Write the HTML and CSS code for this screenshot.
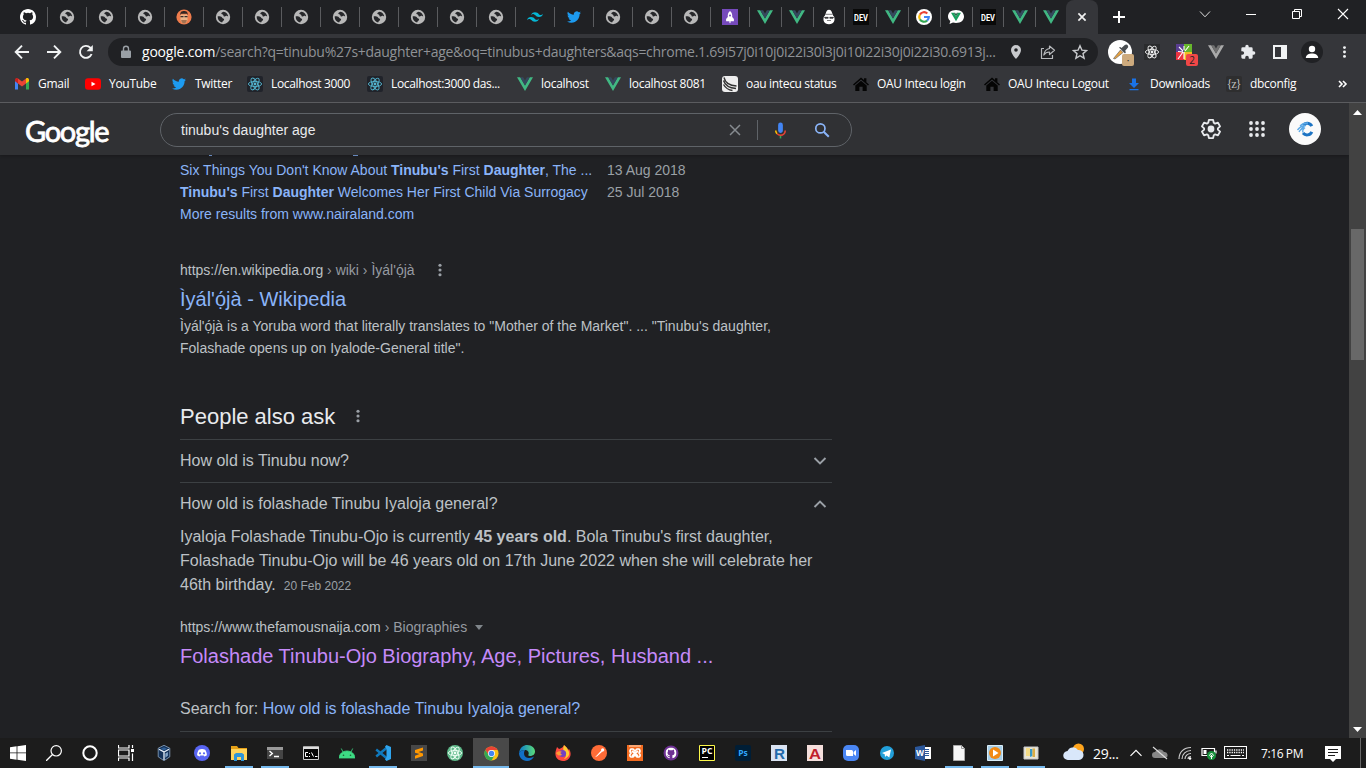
FILE: index.html
```html
<!DOCTYPE html>
<html lang="en">
<head>
<meta charset="utf-8">
<title>tinubu's daughter age - Google Search</title>
<link rel="stylesheet" href="styles.css">
</head>
<body>
<svg class="sprite" aria-hidden="true">
  <symbol id="globe" viewBox="0 0 16 16"><circle cx="8" cy="8" r="7.200" fill="#b8b8b8"/><path d="M2.800 7.200c1.200.1 2.500-.1 3.500.5.900.5.900 1.500 2 1.700 1.100.3 1 1.600.2 2.200-.7.500-.8 1.100-1.400 1.900C4.500 13 2.700 10.700 2.700 8zM8.600 2.700c-.9.500-2.500.8-2.300 1.900.1.900 1.500.7 1.900 1.300.4.700.2 1.700 1.500 1.600 1.100 0 1.300-.8 2.400-.6.500.1.700.4 1.100.4-.3-2.300-2.200-4.400-4.600-4.600z" fill="#26272a"/></symbol>
  <symbol id="github" viewBox="0 0 16 16"><path d="M8 0C3.580 0 0 3.580 0 8c0 3.540 2.290 6.530 5.470 7.590.4.070.55-.17.55-.38 0-.19-.01-.82-.01-1.490-2.010.37-2.530-.49-2.690-.94-.09-.23-.48-.94-.82-1.130-.28-.15-.68-.52-.01-.53.63-.01 1.080.58 1.230.82.72 1.210 1.870.87 2.330.66.070-.52.28-.87.51-1.070-1.780-.2-3.640-.89-3.640-3.950 0-.87.31-1.590.82-2.150-.08-.2-.36-1.020.08-2.120 0 0 .67-.21 2.200.82a7.600 7.600 0 0 1 4 0c1.530-1.040 2.200-.82 2.200-.82.44 1.100.16 1.920.08 2.120.51.56.82 1.270.82 2.150 0 3.070-1.870 3.750-3.650 3.950.29.25.54.73.54 1.480 0 1.070-.01 1.930-.01 2.200 0 .21.15.46.55.38A8.010 8.010 0 0 0 16 8c0-4.420-3.580-8-8-8z" fill="#fff"/></symbol>
  <symbol id="vue" viewBox="0 0 16 16"><path d="M0 1.200h3.200L8 9.500l4.800-8.300H16L8 15z" fill="#41b883"/><path d="M3.200 1.200h2.900L8 4.500l1.900-3.300h2.900L8 9.500z" fill="#35495e"/></symbol>
  <symbol id="twitter" viewBox="0 0 24 24"><path d="M23.950 4.570a10 10 0 0 1-2.820.77 4.960 4.960 0 0 0 2.160-2.720c-.95.550-2 .950-3.130 1.180a4.920 4.920 0 0 0-8.380 4.480C7.690 8.100 4.070 6.130 1.640 3.160a4.900 4.900 0 0 0 1.520 6.570 4.900 4.900 0 0 1-2.230-.61v.06a4.920 4.920 0 0 0 3.950 4.830 5 5 0 0 1-2.210.08 4.940 4.940 0 0 0 4.600 3.420A9.870 9.870 0 0 1 0 19.540a14 14 0 0 0 7.550 2.210c9.050 0 14-7.500 14-13.980 0-.21 0-.42-.02-.63a10 10 0 0 0 2.420-2.570z" fill="#1d9bf0"/></symbol>
  <symbol id="atomrings" viewBox="0 0 16 16"><g fill="none" stroke="currentColor" stroke-width=".9"><ellipse cx="8" cy="8" rx="6.600" ry="2.600"/><ellipse cx="8" cy="8" rx="6.600" ry="2.600" transform="rotate(60 8 8)"/><ellipse cx="8" cy="8" rx="6.600" ry="2.600" transform="rotate(120 8 8)"/></g><circle cx="8" cy="8" r="1.400" fill="currentColor"/></symbol>
  <symbol id="dots" viewBox="0 0 16 16"><g fill="currentColor"><circle cx="8" cy="2.600" r="1.800"/><circle cx="8" cy="8" r="1.800"/><circle cx="8" cy="13.400" r="1.800"/></g></symbol>
  <symbol id="home" viewBox="0 0 16 16"><path d="M0 8.500L8 1.500l3 2.600V2.300h2.400v3.900L16 8.500l-1 1L8 3.600 1 9.500z" fill="#050505"/><path d="M2.300 9.400L8 4.700l5.700 4.700V15H9.600v-4.200H6.400V15H2.300z" fill="#050505"/></symbol>
</svg>

<div class="browser">
  <header class="tabstrip">
    <nav class="tabs">
      <span class="tab"><svg><use href="#github"/></svg></span>
      <span class="tab"><svg><use href="#globe"/></svg></span>
      <span class="tab"><svg><use href="#globe"/></svg></span>
      <span class="tab"><svg><use href="#globe"/></svg></span>
      <span class="tab"><svg viewBox="0 0 16 16"><circle cx="8" cy="8" r="7.600" fill="#ef7c4c"/><path d="M4.500 5.500h7v5c0 2-1.500 4-3.500 4s-3.500-2-3.500-4z" fill="#eab387"/><path d="M4.300 6c-.3-3.500 1.700-4 3.700-4s4 .5 3.700 4l-1-1.200H5.300z" fill="#332623"/><path d="M4.500 7h3v1.300h-3zM8.500 7h3v1.300h-3z" fill="#3b2c2a"/><path d="M5.200 11h5.600c0 2.300-1.300 3.500-2.800 3.500S5.200 13.300 5.200 11z" fill="#a5714f"/></svg></span>
      <span class="tab"><svg><use href="#globe"/></svg></span>
      <span class="tab"><svg><use href="#globe"/></svg></span>
      <span class="tab"><svg><use href="#globe"/></svg></span>
      <span class="tab"><svg><use href="#globe"/></svg></span>
      <span class="tab"><svg><use href="#globe"/></svg></span>
      <span class="tab"><svg><use href="#globe"/></svg></span>
      <span class="tab"><svg><use href="#globe"/></svg></span>
      <span class="tab"><svg><use href="#globe"/></svg></span>
      <span class="tab"><svg viewBox="0 0 24 24"><path d="M12 4.800c-3.200 0-5.200 1.600-6 4.800 1.200-1.600 2.600-2.200 4.200-1.800.91.230 1.570.89 2.290 1.620C13.660 10.620 15.030 12 18 12c3.200 0 5.200-1.600 6-4.800-1.200 1.600-2.600 2.200-4.200 1.800-.91-.23-1.570-.89-2.290-1.620C16.340 6.180 14.970 4.800 12 4.800zM6 12c-3.200 0-5.200 1.600-6 4.800 1.200-1.600 2.600-2.200 4.200-1.800.91.230 1.570.89 2.290 1.620C7.660 17.820 9.030 19.200 12 19.200c3.200 0 5.200-1.600 6-4.800-1.200 1.600-2.600 2.200-4.200 1.800-.91-.23-1.570-.89-2.290-1.620C10.340 13.380 8.970 12 6 12z" fill="#06b6d4"/></svg></span>
      <span class="tab"><svg class="small"><use href="#twitter"/></svg></span>
      <span class="tab"><svg><use href="#globe"/></svg></span>
      <span class="tab"><svg><use href="#globe"/></svg></span>
      <span class="tab"><svg><use href="#globe"/></svg></span>
      <span class="tab"><svg viewBox="0 0 16 16"><path d="M0 0h16v16H0z" fill="#764abc"/><path d="M8 2c2 1.600 2.500 4 2.200 6l1.700 2v2.300H4.100V10l1.700-2C5.500 6 6 3.600 8 2zM7 12.500h2L8 14.500z" fill="#fff"/><circle cx="8" cy="6.500" r="1" fill="#764abc"/></svg></span>
      <span class="tab narrow"><svg><use href="#vue"/></svg></span>
      <span class="tab narrow"><svg><use href="#vue"/></svg></span>
      <span class="tab narrow"><svg viewBox="0 0 16 16"><path d="M8 .8c2 0 3 2 3.200 4H12v1.700l1 1c1.500 3.500 0 7.800-5 7.800s-6.500-4.300-5-7.800l1-1V4.800h.8C5 2.800 6 .8 8 .8z" fill="#fff"/><path d="M4 5.300h8M3.500 8.300h3.700v1H4zM8.800 8.300h3.700L12 9.300H8.800zM6 11.500h4" stroke="#26272a" stroke-width=".6" fill="#26272a"/></svg></span>
      <span class="tab narrow"><svg class="dev" viewBox="0 0 16 16"><path d="M0 0h16v16H0z" fill="#090909"/><text x="1" y="11.500" textLength="14" lengthAdjust="spacingAndGlyphs">DEV</text></svg></span>
      <span class="tab narrow"><svg><use href="#vue"/></svg></span>
      <span class="tab narrow"><svg viewBox="0 0 16 16"><circle cx="8" cy="8" r="8" fill="#fff"/><g fill="none" stroke-width="2.200"><path d="M11.300 4.500A4.800 4.800 0 0 0 3.900 5.600" stroke="#ea4335"/><path d="M3.900 5.600a4.800 4.800 0 0 0 0 4.800" stroke="#fbbc04"/><path d="M3.900 10.400a4.800 4.800 0 0 0 7.200 1.200" stroke="#34a853"/><path d="M11.100 11.600A4.800 4.800 0 0 0 12.800 8H8" stroke="#4285f4"/></g></svg></span>
      <span class="tab narrow"><svg viewBox="0 0 16 16"><path d="M8 1c5 0 8 2.800 8 6.500S13 14 8 14c-1 0-2 0-3-.4L1.500 15l.8-3C.8 10.700 0 9.300 0 7.500 0 3.800 3 1 8 1z" fill="#fff"/><path d="M3 3.700h2.800L8 7.500l2.200-3.800H13L8 12.300z" fill="#18a05e"/><path d="M5.800 3.700h1.400L8 5.200l.8-1.500h1.400L8 7.500z" fill="#246447"/></svg></span>
      <span class="tab narrow"><svg class="dev" viewBox="0 0 16 16"><path d="M0 0h16v16H0z" fill="#090909"/><text x="1" y="11.500" textLength="14" lengthAdjust="spacingAndGlyphs">DEV</text></svg></span>
      <span class="tab narrow"><svg><use href="#vue"/></svg></span>
      <span class="tab narrow last"><svg><use href="#vue"/></svg></span>
      <span class="tab active"><svg viewBox="0 0 16 16"><path d="M4.400 4.400l7.200 7.200M11.600 4.400l-7.200 7.200" stroke="#f1f1f1" stroke-width="1.700"/></svg></span>
    </nav>
    <svg class="newtab" viewBox="0 0 16 16"><path d="M8 2v12M2 8h12" stroke="#fff" stroke-width="2"/></svg>
    <div class="wincontrols">
      <svg viewBox="0 0 16 16"><path d="M3 5.500l5 5.300 5-5.300" fill="none" stroke="#ddd"/></svg>
      <svg viewBox="0 0 16 16"><path d="M3 8.500h10" stroke="#fff"/></svg>
      <svg viewBox="0 0 16 16"><path d="M3.500 5.500h7v7h-7zM5.500 5V3.500h7v7H11" fill="none" stroke="#fff"/></svg>
      <svg viewBox="0 0 16 16"><path d="M3 3l10 10M13 3L3 13" stroke="#fff" stroke-width="1.100"/></svg>
    </div>
  </header>

  <div class="toolbar">
    <div class="navbuttons">
      <svg viewBox="0 0 16 16"><path d="M15 8H2M8 1.700L1.700 8 8 14.300" fill="none" stroke="#f1f3f4" stroke-width="1.900"/></svg>
      <svg viewBox="0 0 16 16"><path d="M1 8h13M8 1.700L14.300 8 8 14.300" fill="none" stroke="#f1f3f4" stroke-width="1.900"/></svg>
      <svg viewBox="0 0 16 16"><path d="M13.600 10A6 6 0 1 1 12.300 3.700L13.800 5.200" fill="none" stroke="#f1f3f4" stroke-width="1.900"/><path d="M14.800 1v6.200H8.600z" fill="#f1f3f4"/></svg>
    </div>
    <div class="omnibox">
      <svg class="lock" viewBox="0 0 12 14"><path d="M2 5.500h8a1 1 0 0 1 1 1V12a1 1 0 0 1-1 1H2a1 1 0 0 1-1-1V6.500a1 1 0 0 1 1-1z" fill="#9aa0a6"/><path d="M3.500 6V3.800a2.500 2.500 0 0 1 5 0V6" fill="none" stroke="#9aa0a6" stroke-width="1.400"/></svg>
      <div class="url"><span class="host">google.com</span><span class="path">/search?q=tinubu%27s+daughter+age&amp;oq=tinubus+daughters&amp;aqs=chrome.1.69i57j0i10j0i22i30l3j0i10i22i30j0i22i30.6913j...</span></div>
      <div class="omniactions">
        <svg viewBox="0 0 16 16"><path d="M8 1a5 5 0 0 0-5 5c0 3.700 5 9 5 9s5-5.300 5-9a5 5 0 0 0-5-5zm0 6.800A1.800 1.800 0 1 1 8 4.200a1.800 1.800 0 0 1 0 3.600z" fill="#c7c9cc"/></svg>
        <svg viewBox="0 0 16 16"><path d="M4 4.500H1.500v10h11V11M9.500 2l5 4.300-5 4.200V8C7 8 5 9 3.800 11c.5-3.500 2.400-6 5.700-6.500z" fill="none" stroke="#b7b9bc" stroke-width="1.200" stroke-linejoin="round"/></svg>
        <svg viewBox="0 0 16 16"><path d="M8 1.800l1.900 4.300 4.700.4-3.600 3.100 1.100 4.600L8 11.700l-4.100 2.500L5 9.600 1.400 6.500l4.700-.4z" fill="none" stroke="#c7c9cc" stroke-width="1.400"/></svg>
      </div>
    </div>
    <div class="extensions">
      <span class="ext"><svg class="picker" viewBox="0 0 24 24"><circle cx="12" cy="12" r="12" fill="#fff"/><path d="M5.500 18.500l7-8.500 2.500 2.500-8 6.500z" fill="#e6a243" stroke="#555" stroke-width=".6"/><path d="M11 7.500l6 6 1-1.500-1-1 3-3.500c1-2-1.500-4-3.200-2.500L13.500 8l-1.300-1z" fill="#4a4e52"/></svg><b class="badge tan">·</b></span>
      <span class="ext"><svg class="darktile" viewBox="0 0 16 16"><use href="#atomrings"/></svg></span>
      <span class="ext"><svg viewBox="0 0 16 16"><path d="M0 0h8v8H0z" fill="#5a3e91"/><path d="M8 0h8v8H8z" fill="#67b72c"/><path d="M0 8h8v8H0z" fill="#ed3342"/><path d="M8 8h8v8H8z" fill="#f1bc22"/><path d="M2 15l5-7M8 8v7M7 7L3 3M8 6V2M9 7l4-5M7 8L2 7.500" stroke="#fff" stroke-width="1.100"/></svg><b class="badge red">2</b></span>
      <span class="ext"><svg viewBox="0 0 16 16"><path d="M0 1.200h3.200L8 9.500l4.800-8.300H16L8 15z" fill="#aaa"/><path d="M3.200 1.200h2.900L8 4.500l1.900-3.300h2.900L8 9.500z" fill="#707070"/></svg></span>
      <span class="ext"><svg viewBox="0 0 24 24"><path d="M20.500 11H19V7a2 2 0 0 0-2-2h-4V3.500a2.500 2.500 0 0 0-5 0V5H4a2 2 0 0 0-2 2v3.800h1.500a2.700 2.700 0 0 1 0 5.400H2V20a2 2 0 0 0 2 2h3.800v-1.500a2.700 2.700 0 0 1 5.400 0V22H17a2 2 0 0 0 2-2v-4h1.500a2.500 2.500 0 0 0 0-5z" fill="#e8eaed"/></svg></span>
      <span class="ext"><svg viewBox="0 0 16 16"><path d="M1 1h14v14H1zm2 2v10h6V3z" fill="#f1f3f4" fill-rule="evenodd"/></svg></span>
      <span class="ext"><svg class="profile" viewBox="0 0 22 22"><circle cx="11" cy="11" r="11" fill="#202124"/><circle cx="11" cy="8" r="3.200" fill="#fff"/><path d="M4.800 17c0-3.300 3.200-4.500 6.200-4.500s6.200 1.200 6.200 4.500z" fill="#fff"/></svg></span>
      <span class="ext menu"><svg><use href="#dots"/></svg></span>
    </div>
  </div>

  <nav class="bookmarks">
    <a class="bm w31"><svg viewBox="0 0 16 16"><path d="M1 4v9.500h3V7.300z" fill="#4285f4"/><path d="M12 7.300v6.200h3V4z" fill="#34a853"/><path d="M1 4.500V3.800C1 2 3 1.700 4 2.500v5L1 5.300z" fill="#c5221f"/><path d="M4 2.500l4 3.100 4-3.100v5L8 10.600 4 7.500z" fill="#ea4335"/><path d="M12 2.500c1-.8 3-.5 3 1.300v1.500l-3 2.200z" fill="#fbbc04"/></svg><span>Gmail</span></a>
    <a class="bm w46"><svg viewBox="0 0 16 16"><rect y="2.200" width="16" height="11.600" rx="3" fill="#f00"/><path d="M6.500 5.700L10.500 8l-4 2.300z" fill="#fff"/></svg><span>YouTube</span></a>
    <a class="bm w36"><svg class="small"><use href="#twitter"/></svg><span>Twitter</span></a>
    <a class="bm w80"><svg class="reacttile" viewBox="0 0 16 16"><use href="#atomrings"/></svg><span>Localhost 3000</span></a>
    <a class="bm w110"><svg class="reacttile" viewBox="0 0 16 16"><use href="#atomrings"/></svg><span>Localhost:3000 das...</span></a>
    <a class="bm w48"><svg><use href="#vue"/></svg><span>localhost</span></a>
    <a class="bm w77"><svg><use href="#vue"/></svg><span>localhost 8081</span></a>
    <a class="bm w91"><svg viewBox="0 0 16 16"><rect width="16" height="16" rx="3" fill="#eee"/><path d="M2 1.500C3 6 6 9.500 14.500 10M1.500 4.500C3 9 7 12 14 12.500M1.500 8.500c2 3.500 5 5.500 9 6" fill="none" stroke="#333" stroke-width="1.400"/></svg><span>oau intecu status</span></a>
    <a class="bm w91"><svg><use href="#home"/></svg><span>OAU Intecu login</span></a>
    <a class="bm w102"><svg><use href="#home"/></svg><span>OAU Intecu Logout</span></a>
    <a class="bm w60"><svg viewBox="0 0 16 16"><path d="M6 2.500h4V7h3l-5 5-5-5h3zM3.500 13h9v1.300h-9z" fill="#1a73e8"/></svg><span>Downloads</span></a>
    <a class="bm w48"><svg class="ztile" viewBox="0 0 16 16"><rect width="16" height="16" rx="2" fill="#2e2e2f"/><text x=".5" y="11.800" textLength="15">{z}</text></svg><span>dbconfig</span></a>
    <svg class="overflow" viewBox="0 0 10 10"><path d="M1 2l3 3-3 3M5 2l3 3-3 3" fill="none" stroke="#fff" stroke-width="1.600"/></svg>
  </nav>
</div>

<div class="viewport">
  <div class="page">
    <header class="searchheader">
      <div class="logo">Google</div>
      <div class="searchbox">
        <span class="query">tinubu's daughter age</span>
        <svg class="clear" viewBox="0 0 16 16"><path d="M2.300 2.300l11.400 11.400M13.700 2.300L2.300 13.700" stroke="#868b90" stroke-width="1.700"/></svg>
        <i class="divider"></i>
        <svg class="mic" viewBox="0 0 24 24"><path d="M12 15c1.660 0 3-1.310 3-2.970V4.980A3 3 0 0 0 12 2a3 3 0 0 0-3 2.980v7.050A3 3 0 0 0 12 15z" fill="#4285f4"/><path d="M11 18.080h2V22h-2z" fill="#34a853"/><path d="M7.050 16.870C5.770 15.580 5 13.900 5 12h2a4.900 4.900 0 0 0 1.460 3.490z" fill="#fbbc04"/><path d="M12 16.930a4.970 4.970 0 0 1-3.540-1.550l-1.410 1.490A7 7 0 0 0 12 18.990 7 7 0 0 0 19 12h-2a5 5 0 0 1-5 4.930z" fill="#ea4335"/></svg>
        <svg class="glass" viewBox="0 0 20 20"><circle cx="7.500" cy="7.500" r="5.400" fill="none" stroke="#8ab4f8" stroke-width="2"/><path d="M11.400 11.400l6 6" stroke="#8ab4f8" stroke-width="2.400"/></svg>
      </div>
      <div class="account">
        <svg class="gear" viewBox="0 0 24 24"><path d="M9.700 2h4.600l.7 3.200 1.500.9 3.100-1 2.300 4-2.400 2.200v1.400l2.400 2.200-2.300 4-3.100-1-1.500.9-.7 3.200H9.700L9 18.800l-1.500-.9-3.100 1-2.300-4 2.400-2.200v-1.400L2.100 9.100l2.300-4 3.100 1L9 5.200z" fill="none" stroke="#e8eaed" stroke-width="2" stroke-linejoin="round"/><circle cx="12" cy="12" r="3.700" fill="#e8eaed"/></svg>
        <svg class="apps" viewBox="0 0 16 16"><g fill="#e8eaed"><circle cx="2" cy="2" r="1.900"/><circle cx="8" cy="2" r="1.900"/><circle cx="14" cy="2" r="1.900"/><circle cx="2" cy="8" r="1.900"/><circle cx="8" cy="8" r="1.900"/><circle cx="14" cy="8" r="1.900"/><circle cx="2" cy="14" r="1.900"/><circle cx="8" cy="14" r="1.900"/><circle cx="14" cy="14" r="1.900"/></g></svg>
        <svg class="avatar" viewBox="0 0 32 32"><circle cx="16" cy="16" r="16" fill="#fafafa"/><path d="M22.800 13.200A5.200 5.200 0 0 0 14 12.200M22.800 18.800A5.200 5.200 0 0 1 14 20" fill="none" stroke="#1d74c4" stroke-width="3"/><path d="M8.500 17c2.500-3.500 5-4.500 8.500-4.500-3 1-4.500 2.500-5 4.500M11 13c2.500-2.500 5-3 8-3M10 19c1.500-2.800 3.500-4 6-4-2 1-2.500 3-2 4.500" fill="none" stroke="#5ba8e6" stroke-width="1.300"/></svg>
      </div>
    </header>

    <main class="results">
      <svg class="peek" viewBox="0 0 400 1"><path d="M29 0h3v1h-3zM173 0h5v1h-5z" fill="#6688bd"/></svg>
      <section class="sitelinks">
        <div class="row"><a>Six Things You Don't Know About <b>Tinubu's</b> First <b>Daughter</b>, The ...</a><time>13 Aug 2018</time></div>
        <div class="row"><a><b>Tinubu's</b> First <b>Daughter</b> Welcomes Her First Child Via Surrogacy</a><time>25 Jul 2018</time></div>
        <div class="row"><a>More results from www.nairaland.com</a></div>
      </section>

      <article class="result">
        <div class="cite"><span>https://en.wikipedia.org<em> › wiki › Ìyál'ọ́jà</em></span><svg class="more"><use href="#dots"/></svg></div>
        <h3>Ìyál'ọ́jà - Wikipedia</h3>
        <p>Ìyál'ọ́jà is a Yoruba word that literally translates to "Mother of the Market". ... "Tinubu's daughter,<br>Folashade opens up on Iyalode-General title".</p>
      </article>

      <section class="paa">
        <h2><span>People also ask</span> <svg class="more"><use href="#dots"/></svg></h2>
        <div class="question"><span>How old is Tinubu now?</span><svg viewBox="0 0 16 16"><path d="M2.500 5l5.500 5.500L13.500 5" fill="none" stroke="#9aa0a6" stroke-width="1.900"/></svg></div>
        <div class="question open"><span>How old is folashade Tinubu Iyaloja general?</span><svg viewBox="0 0 16 16"><path d="M2.500 11L8 5.500l5.500 5.500" fill="none" stroke="#9aa0a6" stroke-width="1.900"/></svg></div>
        <p class="answer">Iyaloja Folashade Tinubu-Ojo is currently <b>45 years old</b>. Bola Tinubu's first daughter,<br>Folashade Tinubu-Ojo will be 46 years old on 17th June 2022 when she will celebrate her<br>46th birthday.<time>20 Feb 2022</time></p>
        <div class="cite"><span>https://www.thefamousnaija.com<em> › Biographies</em></span><svg class="caret" viewBox="0 0 8 5"><path d="M0 0h8L4 5z" fill="#80868b"/></svg></div>
        <h3 class="visited">Folashade Tinubu-Ojo Biography, Age, Pictures, Husband ...</h3>
        <p class="searchfor">Search for: <a>How old is folashade Tinubu Iyaloja general?</a></p>
      </section>
    </main>
  </div>
  <aside class="scrollbar">
    <svg viewBox="0 0 9 5"><path d="M0 5l4.500-5L9 5z" fill="#fff"/></svg>
    <i class="thumb"></i>
    <svg viewBox="0 0 9 5"><path d="M0 0h9L4.500 5z" fill="#fff"/></svg>
  </aside>
</div>

<footer class="taskbar">
  <div class="system">
    <span class="app"><svg viewBox="0 0 16 16"><path d="M0 2.200L6.600 1.300v6.200H0zM7.400 1.200L16 0v7.500H7.400zM0 8.300h6.600v6.400L0 13.800zM7.400 8.300H16V16l-8.600-1.200z" fill="#fff"/></svg></span>
    <span class="app"><svg viewBox="0 0 16 16"><circle cx="10.200" cy="5.800" r="5.200" fill="none" stroke="#fff" stroke-width="1.200"/><path d="M6.500 9.500L0 16" stroke="#fff" stroke-width="1.300"/></svg></span>
    <span class="app"><svg viewBox="0 0 16 16"><circle cx="8" cy="8" r="6.700" fill="none" stroke="#fff" stroke-width="2"/></svg></span>
    <span class="app"><svg viewBox="0 0 16 16"><path d="M.5 0v3h10.500V0M.5 16v-3h10.500v3M.5 5h10.500v6H.500zM14.500 0v3M14.500 8.500V16" fill="none" stroke="#fff" stroke-width="1.200"/><path d="M13 4h3v3h-3z" fill="#fff"/></svg></span>
  </div>
  <span class="app vbox"><svg viewBox="0 0 16 16"><path d="M8 .3l5.800 2.900v8.600L8 15.700l-5.800-3.900V3.200z" fill="#143259" stroke="#9db9d6" stroke-width=".7"/><path d="M8 2.200l3.200 1.600L8 5.500 4.800 3.800z" fill="#2f5f96"/><path d="M3 4.300L8 7v8M13 4.300L8 7" fill="none" stroke="#e6f0fa" stroke-width="1.300"/><path d="M9.300 8.500l2.600-1.400v3.600l-2.600 2z" fill="#7fa3c7"/></svg></span>
  <span class="app discord"><svg viewBox="0 0 16 16"><circle cx="8" cy="8" r="8" fill="#5865f2"/><path d="M4.800 4.700c2-1 4.400-1 6.400 0 1 1.500 1.700 3.200 1.700 5.600-.9.800-1.600 1.100-2.500 1.200l-.7-1H6.300l-.7 1c-.9-.1-1.600-.4-2.500-1.200 0-2.400.7-4.100 1.700-5.600z" fill="#fff"/><circle cx="6" cy="8.300" r="1.100" fill="#5865f2"/><circle cx="10" cy="8.300" r="1.100" fill="#5865f2"/></svg></span>
  <span class="app running"><svg viewBox="0 0 16 16"><path d="M0 1h6l1.500 2H16v12H0z" fill="#e6a117"/><path d="M0 4h16v11H0z" fill="#ffd35b"/><path d="M3 16V9.500L5 8h6l2 1.500V16h-3v-4H6v4z" fill="#2e95d8"/></svg></span>
  <span class="app running"><svg viewBox="0 0 16 16"><path d="M0 2h16v12H0z" fill="#454545"/><path d="M0 2h16v3H0z" fill="#999"/><path d="M2.500 6l2.800 2.500L2.500 11M7 11.500h5" stroke="#fff" stroke-width="1.400" fill="none"/></svg></span>
  <span class="app"><svg viewBox="0 0 16 16"><path d="M.5 2h15v12.500H.5z" fill="#050505" stroke="#ccc"/><path d="M0 1.500h16V4H0z" fill="#ddd"/><path d="M5 7.500H2.500v4H5M6.500 8v1M6.500 11v1M8.500 7.500l2 4M12 11.500h2.500" fill="none" stroke="#fff"/></svg></span>
  <span class="app"><svg viewBox="0 0 16 16"><path d="M0 13c.3-3.900 3.400-7 8-7s7.700 3.100 8 7zM4 7L2.300 3.500M12 7l1.700-3.500" fill="#3ddc84" stroke="#3ddc84" stroke-width=".8"/><circle cx="4.500" cy="10.200" r=".8" fill="#1d6037"/><circle cx="11.500" cy="10.200" r=".8" fill="#1d6037"/></svg></span>
  <span class="app running"><svg viewBox="0 0 16 16"><path d="M1.200 4.500L11.500 13M1.200 11.500L11.500 3" stroke="#1079bd" stroke-width="2.400"/><path d="M11.500 0L16 2v12l-4.500 2-1.500-1.500L11.500 12V4L10 1.500z" fill="#2fa5ee"/></svg></span>
  <span class="app"><svg viewBox="0 0 16 16"><path d="M0 0h16v16H0z" fill="#474747"/><path d="M4 5l8-2.500v3L7.500 7l4.500 1.500V11l-8 2.700v-3L8.500 9 4 7.700z" fill="#ff9800"/></svg></span>
  <span class="app"><svg class="atomapp" viewBox="0 0 16 16"><circle cx="8" cy="8" r="8" fill="#5fb98a"/><use href="#atomrings"/></svg></span>
  <span class="app running current"><svg class="chrome" viewBox="0 0 16 16"><circle cx="8" cy="8" r="7.500" fill="#fbc116"/><path d="M1.500 4.200A7.500 7.500 0 0 1 14.500 4.300H8L5 10z" fill="#ea4335"/><path d="M1.500 4.200A7.500 7.500 0 0 0 8 15.500l3.300-5.700H5z" fill="#34a853"/><circle cx="8" cy="8" r="3.700" fill="#fff"/><circle cx="8" cy="8" r="2.900" fill="#4285f4"/></svg></span>
  <span class="app"><svg viewBox="0 0 16 16"><defs><linearGradient id="eg" x2="1" y2="0"><stop stop-color="#0a79ce"/><stop offset="1" stop-color="#5adc79"/></linearGradient></defs><path d="M0 8C1 2 5 0 8 0c5 0 8 3 8 6.500 0 3-2.500 4.500-5 4.500-2 0-2-1-1.300-2C10 6 8 5 6 5c-3 0-5 1-6 3z" fill="url(#eg)"/><path d="M0 8c1-2 3-3 6-3-2 3-1 8 4 8 2 0 4-1 5-1.500-1 2.500-4 4.500-7 4.500-5 0-8-4-8-8z" fill="#126fc6"/></svg></span>
  <span class="app"><svg viewBox="0 0 16 16"><path d="M1 5l1-3 2 2c2-1 4-1 5-4 2 2 3 2 4 5l1-1c4 6 0 12-6 12S-1 11 1 5z" fill="#ff493f"/><path d="M9 0c2 2 3 2 4 5 4 6-3 9-4 9 3-3 2-5 0-7-1-2-1-4 0-7z" fill="#ffcb2f"/><circle cx="7.500" cy="8.500" r="3.600" fill="#7442c1"/><path d="M1 8c2-2 5-2 6-1-2 0-2 2 0 2.500-1 2-5 1-6-1.500z" fill="#ff9d32"/></svg></span>
  <span class="app"><svg viewBox="0 0 16 16"><circle cx="8" cy="8" r="8" fill="#ff6c37"/><path d="M4 12.300l6-6.600 1.200 1.100-5 4.400zM10 5.500c0-2 2-3 3-1.500s-.6 2.700-1.800 2.800z" fill="#fff"/></svg></span>
  <span class="app"><svg viewBox="0 0 16 16"><path d="M0 0h16v16H0z" fill="#f36c21"/><path d="M2 1h12" stroke="#ffe1c9"/><path d="M4 4h2l2 2 2-2h2c2 2 1 3 0 4 1 1 2 3 0 4h-2l-2-2-2 2H4c-2-1-1-3 0-4-1-1-2-2 0-4zM5 6l6 5M11 6l-6 5" fill="none" stroke="#fff" stroke-width="1.700"/></svg></span>
  <span class="app"><svg viewBox="0 0 16 16"><circle cx="8" cy="8" r="7.500" fill="#6e3193"/><g transform="translate(2.500 2.500) scale(.69)"><use href="#github" width="16" height="16"/></g></svg></span>
  <span class="app"><svg class="lettericon" viewBox="0 0 16 16"><path d="M.5.500h15v15H.500z" fill="#000" stroke="#fcf84a"/><text x="2.500" y="9" textLength="11" lengthAdjust="spacingAndGlyphs">PC</text><path d="M3 12.500h6" stroke="#fff"/></svg></span>
  <span class="app"><svg class="lettericon" viewBox="0 0 16 16"><rect width="16" height="16" rx="2" fill="#001e36"/><text class="ps" x="3.300" y="11" textLength="9.500" lengthAdjust="spacingAndGlyphs">Ps</text></svg></span>
  <span class="app"><svg class="lettericon" viewBox="0 0 16 16"><path d="M0 0h16v16H0z" fill="#dae4f3"/><text class="big revit" x="3" y="13.500" textLength="11" lengthAdjust="spacingAndGlyphs">R</text></svg></span>
  <span class="app"><svg class="lettericon" viewBox="0 0 16 16"><path d="M0 0h16v16H0z" fill="#f5dfdc"/><text class="big autocad" x="2" y="13.500" textLength="12" lengthAdjust="spacingAndGlyphs">A</text></svg></span>
  <span class="app"><svg viewBox="0 0 16 16"><rect width="16" height="16" rx="5" fill="#4a86f3"/><path d="M3 5h5.500q1.500 0 1.500 1.500V11H4.500Q3 11 3 9.500zM10.600 7L13 5v6l-2.400-2z" fill="#fff"/></svg></span>
  <span class="app"><svg viewBox="0 0 16 16"><circle cx="8" cy="8" r="7" fill="#229fd9"/><path d="M3 8l9-3.500-1.700 8L7.500 10.500 6 12l-.3-2.800z" fill="#fff"/></svg></span>
  <span class="app"><svg class="lettericon" viewBox="0 0 16 16"><path d="M8 2h8v12H8z" fill="#fff"/><path d="M10 4.500h4M10 6.500h4M10 8.500h4M10 10.500h4" stroke="#2b579a"/><path d="M0 2l10-2v16L0 14z" fill="#2b579a"/><text x="1" y="11" textLength="8" lengthAdjust="spacingAndGlyphs">W</text></svg></span>
  <span class="app running"><svg viewBox="0 0 16 16"><path d="M2.500.500h8l3 3v12h-11z" fill="#f6f6f6" stroke="#aaa"/><path d="M10.500.500v3h3" fill="none" stroke="#999"/></svg></span>
  <span class="app running"><svg viewBox="0 0 16 16"><path d="M.5.500h15v15H.500z" fill="#a7cee8" stroke="#d9edf8"/><circle cx="8" cy="8" r="6" fill="#f28a14"/><path d="M6 4.500l5.500 3.500L6 11.500z" fill="#fff"/></svg></span>
  <span class="app running"><svg viewBox="0 0 16 16"><path d="M1 2h14v12H1z" fill="#e9e6d6" stroke="#c9c9c9"/><path d="M3 3h4v8H3z" fill="#f4dc86"/><path d="M7 4h2.500v7L7 12z" fill="#3a9ac8"/><path d="M9.500 3.500h2.500V12H9.500z" fill="#dcae45"/></svg></span>

  <div class="tray">
    <svg class="weather" viewBox="0 0 22 18"><circle cx="15.500" cy="6" r="5.500" fill="#ffa51d"/><path d="M5 17a4.500 4.500 0 0 1-.5-9A6 6 0 0 1 15 7a5 5 0 0 1 1 10z" fill="#d9e7fa"/></svg>
    <span class="temp">29...</span>
    <svg class="up" viewBox="0 0 12 8"><path d="M.5 6.800L6 1.300l5.500 5.500" fill="none" stroke="#fff" stroke-width="1.200"/></svg>
    <svg class="cloud" viewBox="0 0 16 14"><path d="M3 12a3 3 0 0 1 0-6 5 5 0 0 1 9 0 3 3 0 0 1 1 6z" fill="#888"/><path d="M1 1l14 12" stroke="#ddd" stroke-width="1.100"/></svg>
    <svg class="wifi" viewBox="0 0 14 14"><path d="M1 13C1 6 6 1.500 13 1.500M4 13c0-5 4-8.500 9-8.500M7 13c0-3 2.500-5.500 6-5.500M10 13c0-1.500 1-2.500 3-2.500" fill="none" stroke="#ccc" stroke-width="1.200"/><circle cx="12" cy="12.500" r="1.300" fill="#fff"/></svg>
    <svg class="battery" viewBox="0 0 16 14"><path d="M1 2.500h12.500v7H1zM15 4.500v3" fill="none" stroke="#fff" stroke-width="1.200"/><path d="M2.500 4h3v4h-3z" fill="#fff"/><circle cx="10.500" cy="9.500" r="4.500" fill="#16913b"/><path d="M10.500 7l2 2.300-2 2-2-2zM10.500 9v4" fill="none" stroke="#fff"/></svg>
    <svg class="keyboard" viewBox="0 0 23 14"><path d="M.5.500h22v12H.500z" fill="none" stroke="#fff" stroke-width="1.100"/><path d="M3 4h17M3 6.500h17" stroke="#fff" stroke-width="1.300" stroke-dasharray="1.300 1"/><path d="M3 9.500h2M6.500 9.500h10M18 9.500h2" stroke="#fff"/></svg>
    <span class="clock">7:16 PM</span>
    <svg class="notice" viewBox="0 0 16 16"><path d="M0 0h16v13h-5l-3 3-3-3H0z" fill="#fff"/><path d="M3 3.500h10M3 6.500h10M3 9.500h7" stroke="#1c1c1c"/></svg>
    <i class="showdesktop"></i>
  </div>
</footer>
</body>
</html>
```
FILE: styles.css
```css
* { box-sizing: border-box; }
html, body { margin: 0; height: 100%; overflow: hidden; }
body { width: 1366px; height: 768px; display: flex; flex-direction: column; background: #202124; color: #bdc1c6; font-family: "Liberation Sans", Arial, sans-serif; }
.sprite { display: none; }
svg { width: 16px; height: 16px; flex: none; display: block; }
svg.small { width: 14px; height: 14px; }

.browser { height: 103px; background: #35363a; border-bottom: 1px solid #5b5c5f; font-family: "Open Sans", "Noto Sans", sans-serif; flex: none; }
.tabstrip { height: 34px; background: #202124; display: flex; align-items: center; }
.tabs { display: flex; align-items: center; height: 34px; padding-left: 9px; width: 1097px; flex: none; }
.tab { width: 39px; height: 20px; border-right: 1px solid #5a5b5e; display: flex; align-items: center; justify-content: center; flex: none; }
.tab.narrow { width: 31.8px; }
.tab.last { border: 0; width: 29.8px; }
.tab.active { border: 0; width: 32px; height: 34px; background: #35363a; border-radius: 8px 8px 0 0; }
.dev text { fill: #fff; font: bold 9px "Roboto", sans-serif; }
.newtab { margin-left: 14px; }
.wincontrols { margin-left: auto; display: flex; gap: 30px; padding: 0 15px 6px 0; }

.toolbar { height: 36px; display: flex; align-items: center; }
.navbuttons { display: flex; gap: 16px; padding-left: 14px; width: 108px; }
.omnibox { width: 990px; height: 28px; border-radius: 14px; background: #202124; display: flex; align-items: center; padding: 0 10px 0 12px; }
.lock { width: 12px; height: 14px; }
.url { margin-left: 10px; width: 858px; display: flex; font-size: 14px; white-space: nowrap; color: #8f9296; line-height: 20px; }
.host { color: #fff; letter-spacing: -.2px; }
.path { letter-spacing: -.28px; }
.omniactions { display: flex; gap: 16px; margin-left: auto; }
.extensions { display: flex; margin-left: 6px; }
.ext { position: relative; width: 32px; height: 24px; display: flex; align-items: center; justify-content: center; }
.picker { width: 24px; height: 24px; }
.profile { width: 22px; height: 22px; }
.darktile { background: #2a2b2d; color: #f1f1f1; }
.menu { color: #f1f3f4; }
.menu svg { width: 13px; height: 14px; }
.badge { position: absolute; right: 2px; bottom: -2px; width: 12px; height: 12px; border-radius: 2px; color: #222; font: 10px/12px "Open Sans", sans-serif; text-align: center; }
.tan { background: #cdaa7d; }
.red { right: 2px; background: #f04747; }

.bookmarks { height: 28px; display: flex; align-items: center; gap: 16px; padding-left: 14px; }
.bm { display: flex; align-items: center; gap: 8px; color: #fff; font-size: 12px; letter-spacing: -.28px; line-height: 16px; white-space: nowrap; }
.bm svg.small { margin: 0 1px; }
.w31 span { width: 31px; } .w36 span { width: 36px; } .w46 span { width: 46px; }
.w48 span { width: 48px; } .w60 span { width: 60px; } .w77 span { width: 77px; }
.w80 span { width: 80px; } .w91 span { width: 91px; } .w102 span { width: 102px; }
.w110 span { width: 110px; }
.w80 span, .w110 span { letter-spacing: -.36px; }
.w91 span { letter-spacing: -.33px; }
.reacttile { background: #20232a; border-radius: 2px; color: #53b5d0; }
.ztile text { font: 12.5px "Liberation Serif", serif; fill: #bbb; letter-spacing: 0; }
.overflow { width: 10px; height: 10px; margin-left: 24px; }

.viewport { height: 635px; display: flex; flex: none; }
.page { width: 1349px; overflow: hidden; }
.searchheader { height: 52px; background: #303134; display: flex; align-items: center; box-shadow: 0 1px 3px rgba(0,0,0,.25); }
.logo { width: 160px; padding: 3px 0 0 25px; color: #fff; font: 29px/40px "Lato", sans-serif; letter-spacing: -1.3px; -webkit-text-stroke: .8px #fff; }
.searchbox { width: 692px; height: 34px; border: 1px solid #5f6368; border-radius: 17px; display: flex; align-items: center; padding: 0 20px; margin-top: 2px; }
.query { color: #e8eaed; font-size: 14px; width: 548px; letter-spacing: .01px; }
.clear { width: 14px; height: 14px; }
.divider { width: 1px; height: 20px; background: #5f6368; margin: 0 13px 0 15px; }
.mic { width: 19px; height: 19px; }
.glass { width: 17px; height: 17px; margin-left: 24px; }
.account { margin-left: auto; display: flex; align-items: center; padding-right: 28px; }
.gear { width: 22px; height: 22px; }
.apps { margin: 0 24px 0 27px; }
.avatar { width: 32px; height: 32px; }

.results { padding-left: 180px; width: 832px; font-size: 14px; line-height: 22px; }
.peek { width: 400px; height: 1px; }
.sitelinks { padding-top: 3px; }
.row { display: flex; }
.row a { width: 427px; color: #8ab4f8; white-space: nowrap; }
time { color: #9aa0a6; }
.cite { display: flex; align-items: center; height: 22px; color: #bdc1c6; }
.cite em { font-style: normal; color: #969ba1; }
.more { width: 14px; height: 14px; color: #9aa0a6; }
.cite .more { margin-left: 18px; }
.result { padding-top: 34px; }
h3 { margin: 5px 0 3px; color: #8ab4f8; font-size: 20px; line-height: 26px; font-weight: normal; white-space: nowrap; }
p { margin: 0; white-space: nowrap; }
.paa { padding-top: 43px; }
h2 { margin: 0 0 9px; font-size: 22px; line-height: 28px; height: 28px; font-weight: normal; color: #e8eaed; display: flex; align-items: center; }
h2 span { padding-top: 2px; }
h2 .more { margin-left: 16px; }
.question { border-top: 1px solid #3c4043; height: 43px; display: flex; align-items: center; justify-content: space-between; font-size: 16px; padding-right: 4px; }
.question.open { height: 43px; padding-bottom: 1px; }
.answer { font-size: 16px; line-height: 24px; height: 72px; }
.answer time { font-size: 12px; margin-left: 8px; }
.paa .cite { margin-top: 19px; }
.caret { width: 8px; height: 5px; margin-left: 8px; }
.visited { color: #c58af9; margin-bottom: 0; }
.searchfor { font-size: 16px; padding: 29px 0 11px; border-bottom: 1px solid #3c4043; }
.searchfor a { color: #8ab4f8; }
.scrollbar { width: 17px; background: #424242; display: flex; flex-direction: column; align-items: center; justify-content: space-between; padding: 7px 0 6px; }
.scrollbar svg { width: 9px; height: 5px; }
.thumb { width: 13px; height: 131px; background: #686868; margin: 114px 0 auto; }

.taskbar { height: 30px; background: #1c1c1c; display: flex; align-items: stretch; color: #fff; font-family: "Open Sans", sans-serif; flex: none; }
.system { display: flex; width: 146px; }
.app { width: 36px; height: 30px; display: flex; align-items: center; justify-content: center; background: linear-gradient(#76b9ed, #76b9ed) center bottom / 0 2px no-repeat; flex: none; }
.discord { margin: 0 1px 0 2px; }
.running { background-size: 28px 2px; }
.current { background-color: #494949; background-size: 36px 2px; }
.chrome { width: 15px; height: 15px; }
.atomapp { color: #f0fff6; }
.lettericon text { font-family: "Open Sans", sans-serif; font-size: 8px; font-weight: bold; fill: #fff; }
.lettericon .ps { fill: #31a8ff; }
.lettericon .big { font-family: "Liberation Sans", sans-serif; font-size: 15px; }
.lettericon .revit { fill: #246bac; }
.lettericon .autocad { fill: #bf202b; }
.tray { width: 317px; padding-left: 14px; display: flex; align-items: center; }
.weather { width: 22px; height: 18px; margin-bottom: 2px; }
.temp { font-size: 14px; margin-left: 8px; width: 37px; letter-spacing: -.3px; }
.up { width: 12px; height: 8px; }
.cloud { width: 16px; height: 14px; margin-left: 10px; }
.wifi { width: 14px; height: 14px; margin-left: 10px; }
.battery { width: 16px; height: 14px; margin-left: 9px; }
.keyboard { width: 23px; height: 14px; margin-left: 7px; }
.clock { font-size: 12px; margin-left: 14px; width: 64px; letter-spacing: -.4px; white-space: nowrap; }
.notice { margin-top: 1px; }
.showdesktop { width: 1px; height: 30px; background: #666; margin-left: 19px; }
```
